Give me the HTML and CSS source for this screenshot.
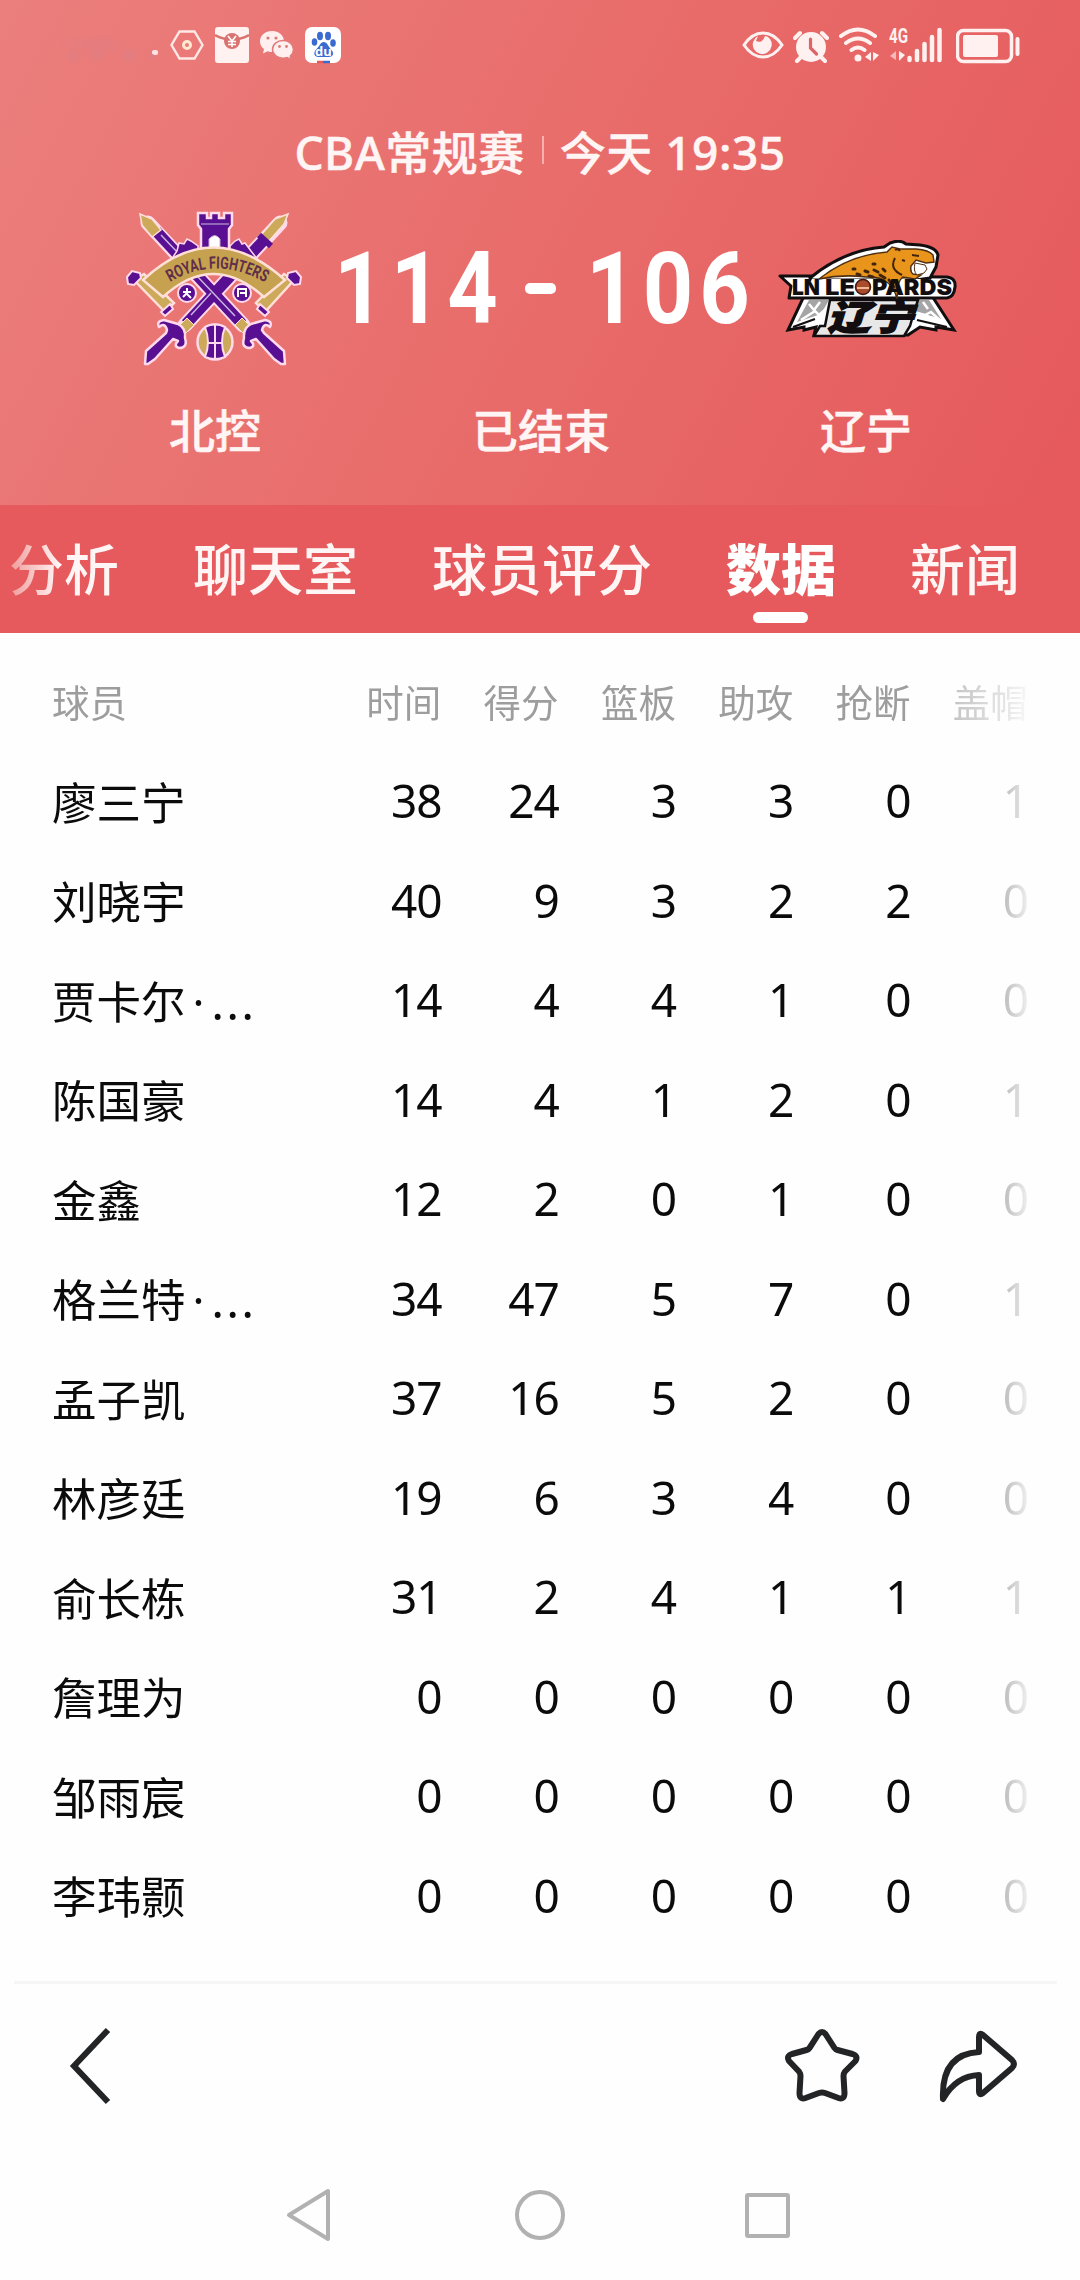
FILE: index.html
```html
<!DOCTYPE html>
<html lang="zh-CN">
<head>
  <meta charset="UTF-8" />
  <title>北控 - 辽宁</title>
  <link rel="stylesheet" href="styles.css">
</head>
<body>
  <header class="hero">
    <div class="status-bar">
      <div class="status-left">
        <svg class="carrier" width="84" height="40" viewBox="0 0 84 40">
          <g fill="#c78398">
            <ellipse cx="15" cy="17" rx="12" ry="6" opacity=".3" />
            <ellipse cx="42" cy="20" rx="20" ry="8" opacity=".4" />
            <circle cx="14" cy="31" r="5" />
            <circle cx="36" cy="30" r="5" />
            <circle cx="69" cy="30" r="6" />
          </g>
        </svg>
        <svg class="dot" width="16" height="40" viewBox="0 0 16 40">
          <rect x="0" y="25" width="6" height="5" rx="2" fill="#fbe3e3" />
          <path d="M-4 31h6" stroke="#b98aa0" stroke-width="4" opacity=".5" />
        </svg>
        <svg width="34" height="40" viewBox="0 0 34 40">
          <path d="M9.500 6.500h15L32.500 20l-8 13.500h-15L1.500 20z" fill="none" stroke="#ffe9e7" stroke-width="2.400" />
          <circle cx="17" cy="20" r="3.500" fill="none" stroke="#ffe9d0" stroke-width="3" />
        </svg>
        <svg width="34" height="40" viewBox="0 0 34 40">
          <rect x="0" y="2" width="34" height="36" rx="3" fill="#fff2f1" />
          <path d="M0 10q17 9 34 0" fill="none" stroke="#d9736f" stroke-width="2.500" />
          <circle cx="17" cy="16" r="8" fill="#d9736f" />
          <path d="M13 11l4 5 4-5M17 16v6M13 16.500h8M13 19.500h8" fill="none" stroke="#fff" stroke-width="1.600" />
        </svg>
        <svg width="34" height="40" viewBox="0 0 34 40">
          <path d="M12 6c7 0 12 4.500 12 10.500S19 27 12 27c-2 0-3-.3-4.500-.8L3 28.500l1-4.500C1.500 22 0 19.500 0 16.500 0 10.500 5 6 12 6z" fill="#fff0ef" />
          <path d="M23 15.500c6 0 10.500 4 10.500 9 0 2.600-1.300 5-3.300 6.500l.8 3.500-4-2c-1.200.4-2.500.7-4 .7-6 0-10.500-4-10.500-8.700 0-5 4.500-9 10.500-9z" fill="#fff0ef" stroke="#e27c7b" stroke-width="1.500" />
          <g fill="#d97a77"><circle cx="8" cy="13" r="1.600" /><circle cx="16" cy="13" r="1.600" /><circle cx="19.500" cy="21.500" r="1.400" /><circle cx="26.500" cy="21.500" r="1.400" /></g>
        </svg>
        <svg width="36" height="40" viewBox="0 0 36 40">
          <rect x="0" y="2" width="36" height="36" rx="7" fill="#fff" />
          <g fill="#3a6bd0">
            <ellipse cx="15" cy="11" rx="3" ry="4.200" /><ellipse cx="23" cy="11" rx="3" ry="4.200" />
            <ellipse cx="9.500" cy="17" rx="2.800" ry="3.800" /><ellipse cx="28" cy="18" rx="2.800" ry="3.800" />
            <path d="M18.500 17c4 0 5 5 8 8 3.500 4 1 7-3 7h-10c-4 0-6-4-2-8 3-2.500 4-7 7-7z" />
          </g>
          <text x="18.500" y="30.500" class="du">du</text>
          <path d="M12 37h6" stroke="#e25a5a" stroke-width="2.500" /><path d="M18 37h7" stroke="#3a6bd0" stroke-width="2.500" />
        </svg>
      </div>
      <div class="status-right">
        <svg width="42" height="40" viewBox="0 0 42 40">
          <path d="M2 20Q10 8 21 8t19 12Q32 32 21 32T2 20z" fill="none" stroke="#fff1f0" stroke-width="3" />
          <path d="M16 11a9.500 9.500 0 1 0 12 3q-2-3-5-3-3 8-9 5z" fill="#fff1f0" />
        </svg>
        <svg width="36" height="40" viewBox="0 0 36 40">
          <path d="M2 13l5-5M34 13l-5-5M8 32l-4 4M28 32l4 4" stroke="#fff1f0" stroke-width="4" stroke-linecap="round" />
          <circle cx="18" cy="22" r="15" fill="#fff1f0" />
          <path d="M17.500 14v9l6 6" fill="none" stroke="#dc6667" stroke-width="3.200" stroke-linecap="round" />
        </svg>
        <svg width="42" height="40" viewBox="0 0 42 40">
          <g fill="none" stroke="#fff1f0" stroke-width="4" stroke-linecap="round">
            <path d="M3 11q17-13 34 0M8 18q12-9 24 0M13.500 25q6.500-5 13 0" />
          </g>
          <circle cx="20" cy="33" r="3.500" fill="#fff1f0" />
          <path d="M33 27v9l-6-4zM35 27v9l6-6z" fill="#fff1f0" />
        </svg>
        <svg width="54" height="40" viewBox="0 0 54 40">
          <text x="0" y="18" class="net" textLength="19" lengthAdjust="spacingAndGlyphs">4G</text>
          <path d="M7 26v9l-6-4z" fill="#fff1f0" opacity=".6" /><path d="M10 26v10l6-6z" fill="#fff1f0" />
          <path d="M20.500 33v2M28 26v9M35.500 19v16M43 12v23M50.500 5v30" stroke="#fff1f0" stroke-width="4.500" stroke-linecap="round" />
        </svg>
        <svg class="battery" width="64" height="40" viewBox="0 0 64 40">
          <rect x="1.500" y="5.500" width="54" height="31" rx="6" fill="none" stroke="#fff1f0" stroke-width="3.500" />
          <rect x="7" y="10" width="35" height="22" rx="2" fill="#fff1f0" />
          <path d="M61.500 14v15" stroke="#fff1f0" stroke-width="4" stroke-linecap="round" />
        </svg>
      </div>
    </div>

    <div class="match-title">
      <span>CBA常规赛</span>
      <i class="sep"></i>
      <span>今天 19:35</span>
    </div>

    <div class="match">
      <svg width="180" height="170" viewBox="0 0 180 170">
        <!-- crossed swords -->
        <g stroke="#ffd9ec" stroke-linecap="round">
          <path d="M23 18L118 120" stroke-width="15" /><path d="M155 18L60 120" stroke-width="15" />
        </g>
        <path d="M31 26L117 119" stroke="#580f92" stroke-width="11" />
        <path d="M140 34L61 119" stroke="#580f92" stroke-width="11" />
        <path d="M72 71L110 111M36 30L55 50M66 110l20-22" stroke="#c9b4df" stroke-width="1.500" />
        <path d="M15 9l12 5 9 11-9 7L17 20zM163 9l-13 5-14 16 8 6 15-17z" fill="#cda95a" stroke="#ffe0d8" stroke-width="1.500" />
        <path d="M134 30l12 11" stroke="#580f92" stroke-width="6" />
        <path d="M52 46l2-8 5 1 3-5 4 2 7 5v14H46zM126 46l-6-8-3 1-3-5-4 2-5 5v14h28z" fill="#580f92" stroke="#ffd9ec" stroke-width="1.500" />
        <!-- castle -->
        <path d="M73 8h9v5h4V8h8v5h5V8h8v12l-3 4v30H76V24l-3-4z" fill="#580f92" stroke="#ffd9ec" stroke-width="2.500" />
        <path d="M84 50V34q6-7 11 0v16z" fill="#fff" stroke="#c9a5d8" stroke-width="1" />
        <path d="M76 19h28" stroke="#a386c4" stroke-width="1.500" />
        <!-- ribbon -->
        <path d="M9 75l10-6 30 29-9 9zM169 75l-10-6-28 29 9 9z" fill="#cda95a" stroke="#ffe0d8" stroke-width="2.500" />
        <path d="M18 75Q88 10 160 75L139 92Q88 46 38 92z" fill="#c6a14f" stroke="#ffe0d8" stroke-width="2.500" />
        <path id="ribbon-curve" d="M45 77Q91 50 139 77" fill="none" />
        <text class="ribbon-text"><textPath href="#ribbon-curve" textLength="100" lengthAdjust="spacingAndGlyphs">ROYAL FIGHTERS</textPath></text>
        <g fill="#580f92" stroke="#ffd9ec" stroke-width="2">
          <path d="M2 72l5-6 8 2 1 5-7 7-6-1zM176 72l-5-6-8 2-1 5 7 7 6-1z" />
          <path d="M36 107l9-8 3 5-8 7zM144 107l-9-8-3 5 8 7z" />
          <circle cx="62" cy="88" r="9" /><circle cx="117" cy="88" r="9" />
        </g>
        <path d="M58 87h8M62 83v5l-4 4M62 89l4 4M113 92v-8h8v8M115 88h5" fill="none" stroke="#fff" stroke-width="2" />
        <!-- hilts -->
        <path d="M62 113l7 7-10 10-7-7zM117 113l-7 7 10 10 7-7z" fill="#cda95a" stroke="#ffe0d8" stroke-width="1" />
        <g fill="#580f92" stroke="#ffd9ec" stroke-width="2.500" stroke-linejoin="round">
          <path d="M42 125q-2-8-8-3-3-6 5-7l14 4q8 4 7 14 3 10-6 10-6-2-1-7l-5-2-18 20-7 5H20l1-13 20-18z" />
          <path d="M137 125q2-8 8-3 3-6-5-7l-14 4q-8 4-7 14-3 10 6 10 6-2 1-7l5-2 18 20 7 5h4l-1-13-20-18z" />
        </g>
        <circle cx="90" cy="137" r="17.500" fill="#cda95a" stroke="#ffd9ec" stroke-width="2.500" />
        <path d="M80 122q10-5 20 0-6 15 0 30-10 4-20 0 6-15 0-30z" fill="#580f92" stroke="#ffd9ec" stroke-width="2" />
        <path d="M90 119v36M82 138h16" stroke="#ffd9ec" stroke-width="2" />
      </svg>

      <div class="score">
        <span class="num">114</span>
        <i class="dash"></i>
        <span class="num">106</span>
      </div>

      <svg class="logo-away" width="180" height="110" viewBox="0 0 180 110">
        <!-- mountains -->
        <path d="M27 56h128l22 34-18-3v3l-16-3-12 8H37l2-8-12 3v-3l-16 3z" fill="#fff" stroke="#120e10" stroke-width="3" />
        <path d="M32 60L20 82l24-8 8-14zM140 60h12l12 19-26-8z" fill="#a5a5a5" />
        <path d="M24 80l14-9 4 4 8-7M136 72l12 3 6-3 14 13M32 64l5 6 6-8M146 62l5 7" fill="none" stroke="#fff" stroke-width="2.500" />
        <path d="M16 87l22-8M140 80l30 7" stroke="#120e10" stroke-width="2" />
        <!-- name plate -->
        <path d="M3 36h38l129 1q9 1 8 10-1 10-8 11H12l2-12z" fill="#fff" stroke="#120e10" stroke-width="3" stroke-linejoin="round" />
        <!-- leopard -->
        <path d="M33 38Q67 10 107 7l6-4q10-4 16 1l14 1q16 2 18 10l-2 12-6 11-14 2H34z" fill="#fff" stroke="#120e10" stroke-width="3" />
        <path d="M35 39h118l-2 4H33z" fill="#fff" />
        <path d="M42 39Q72 15 110 12l5-5 8 2h16q13 1 17 6l1 7-8 1-10-3-5 6q-1 6 2 8l8 1-6 4-12-2q-3 2-5 8l-1 14q-3-12-9-16-8-7-22-6-24-3-47 2z" fill="#e9951b" stroke="#503012" stroke-width="1.500" />
        <path d="M138 23l10 2 2 4-3 4-7 2q-4-4-2-12z" fill="#fff" stroke="#503012" />
        <path d="M135 15l7 1M118 10q3-2 5 1M118 18q-6 11 7 17M125 20l3 1" stroke="#44240c" stroke-width="2" fill="none" />
        <path d="M88 31l3 1M97 30l4 2M106 29l2 2M103 35l5 3M92 36l4 1M80 34l3 1M112 40l5 7M76 29l2 0M96 24l2 0" stroke="#44240c" stroke-width="3" stroke-linecap="round" fill="none" />
        <text x="15" y="55" class="plate-text" textLength="28" lengthAdjust="spacingAndGlyphs">LN</text>
        <text x="48" y="55" class="plate-text" textLength="30" lengthAdjust="spacingAndGlyphs">LE</text>
        <text x="95" y="55" class="plate-text" textLength="80" lengthAdjust="spacingAndGlyphs">PARDS</text>
        <circle cx="86" cy="47" r="7.500" fill="#a94c2c" stroke="#43180e" stroke-width="1.500" />
        <path d="M80 48h12" stroke="#efb794" stroke-width="2" />
        <!-- lower block -->
        <path d="M53 60h88l-4 12-4 14-6 10H37l6-10h5z" fill="#e8e8e8" stroke="#120e10" stroke-width="2.500" />
        <text x="50" y="90" class="block-text" textLength="86" lengthAdjust="spacingAndGlyphs">辽宁</text>
      </svg>
    </div>

    <div class="names">
      <span>北控</span>
      <span>已结束</span>
      <span>辽宁</span>
    </div>
  </header>

  <nav class="tabs">
    <a class="faded">分析</a>
    <a>聊天室</a>
    <a>球员评分</a>
    <a class="active">数据</a>
    <a>新闻</a>
  </nav>

  <main class="stats">
    <div class="row head">
      <span>球员</span><span>时间</span><span>得分</span><span>篮板</span><span>助攻</span><span>抢断</span><span>盖帽</span>
    </div>
    <div class="row"><span>廖三宁</span><span>38</span><span>24</span><span>3</span><span>3</span><span>0</span><span>1</span></div>
    <div class="row"><span>刘晓宇</span><span>40</span><span>9</span><span>3</span><span>2</span><span>2</span><span>0</span></div>
    <div class="row"><span>贾卡尔<b>·</b><em>...</em></span><span>14</span><span>4</span><span>4</span><span>1</span><span>0</span><span>0</span></div>
    <div class="row"><span>陈国豪</span><span>14</span><span>4</span><span>1</span><span>2</span><span>0</span><span>1</span></div>
    <div class="row"><span>金鑫</span><span>12</span><span>2</span><span>0</span><span>1</span><span>0</span><span>0</span></div>
    <div class="row"><span>格兰特<b>·</b><em>...</em></span><span>34</span><span>47</span><span>5</span><span>7</span><span>0</span><span>1</span></div>
    <div class="row"><span>孟子凯</span><span>37</span><span>16</span><span>5</span><span>2</span><span>0</span><span>0</span></div>
    <div class="row"><span>林彦廷</span><span>19</span><span>6</span><span>3</span><span>4</span><span>0</span><span>0</span></div>
    <div class="row"><span>俞长栋</span><span>31</span><span>2</span><span>4</span><span>1</span><span>1</span><span>1</span></div>
    <div class="row"><span>詹理为</span><span>0</span><span>0</span><span>0</span><span>0</span><span>0</span><span>0</span></div>
    <div class="row"><span>邹雨宸</span><span>0</span><span>0</span><span>0</span><span>0</span><span>0</span><span>0</span></div>
    <div class="row"><span>李玮颢</span><span>0</span><span>0</span><span>0</span><span>0</span><span>0</span><span>0</span></div>
  </main>

  <footer class="toolbar">
    <svg width="44" height="80" viewBox="0 0 44 80">
      <path d="M39 4L5 40l34 36" fill="none" stroke="#222426" stroke-width="6" />
    </svg>
    <svg class="star" width="76" height="76" viewBox="0 0 76 76">
      <path d="M34.500 6q3.500-4 7 0l9 14q1 1.500 3 2l15 4q6 2 3 7L61 43.500q-1.500 2-1.500 4.500l1 17q0 7-6 5L41 65q-3-1-6 0l-13.500 5q-6 2-6-5l1-17q0-2.500-1.500-4.500L5 33q-3-5 3-7l14.500-4q2-.5 3-2z" fill="none" stroke="#222426" stroke-width="6" stroke-linejoin="round" />
    </svg>
    <svg width="80" height="76" viewBox="0 0 80 76">
      <path d="M41 9q0-5 4-2L74 32q4 4 0 8L45 65q-4 3-4-2V47Q18 48 5 71 3 26 41 24z" fill="none" stroke="#222426" stroke-width="6" stroke-linejoin="round" />
    </svg>
  </footer>

  <div class="sys-nav">
    <svg width="50" height="56" viewBox="0 0 50 56"><path d="M43 4v48L4 28z" fill="none" stroke="#b1b1b1" stroke-width="4" stroke-linejoin="round" /></svg>
    <i class="home"></i>
    <i class="recent"></i>
  </div>
</body>
</html>
```

FILE: styles.css
```css
* {
  box-sizing: border-box;
}

body {
  margin: 0;
  width: 1080px;
  height: 2280px;
  overflow: hidden;
  background: #fefefe;
  font-family: "Noto Sans CJK SC", sans-serif;
  color: #0b0b0b;
}

svg {
  display: block;
  flex: none;
}

.hero {
  height: 505px;
  background: linear-gradient(118deg, #eb7f7d 0%, #e86d6b 48%, #e65a5d 97%);
  color: #fff5f4;
  font-weight: 500;
}

.status-bar {
  height: 90px;
  padding: 25px 60px 0 60px;
  display: flex;
  justify-content: space-between;
}

.status-left {
  display: flex;
  gap: 11px;
}

.status-left .carrier {
  margin-right: -3px;
  opacity: 0.3;
  filter: blur(3px);
}

.status-left .dot {
  margin-right: -9px;
}

.status-right {
  display: flex;
  gap: 9px;
}

.status-right .battery {
  margin-left: 4px;
}

.du {
  font: bold 13px "Open Sans", sans-serif;
  fill: #fff;
  text-anchor: middle;
}

.net {
  font: bold 20px Roboto, sans-serif;
  fill: #fff1f0;
}

.match-title {
  height: 115px;
  padding-top: 4px;
  display: flex;
  justify-content: center;
  align-items: center;
  font-family: "Noto Sans", "Noto Sans CJK SC", sans-serif;
  font-size: 46px;
  letter-spacing: 0.5px;
  -webkit-text-stroke: 0.5px #fff5f4;
}

.sep {
  width: 2px;
  height: 28px;
  margin: 0 16px 0 17px;
  background: #f3b0ae;
}

.match {
  height: 170px;
  padding-left: 125px;
  display: flex;
  align-items: flex-start;
}

.logo-away {
  margin-top: 35px;
}

.ribbon-text {
  font: bold 17px Roboto, sans-serif;
  fill: #5f2f4a;
}

.plate-text {
  font: 900 22px Inter, sans-serif;
  fill: #120e10;
}

.block-text {
  font: italic 900 34px "Noto Sans CJK SC", sans-serif;
  fill: #120e10;
  stroke: #120e10;
  stroke-width: 1.5px;
}

.score {
  margin: 34px 21px 0 29px;
  display: flex;
  align-items: center;
  color: #fff;
  font: bold 100px/1 Roboto, sans-serif;
}

/* narrow scoreboard digits */
.num {
  width: 170px;
  letter-spacing: 7px;
  transform: scaleX(0.88);
  transform-origin: left;
}

.dash {
  width: 31px;
  height: 11px;
  margin: 0 30px 2px 21px;
  border-radius: 5px;
  background: #fff;
}

.names {
  height: 106px;
  display: grid;
  grid-template-columns: 430px 1fr 428px;
  align-items: center;
  text-align: center;
  font-size: 46px;
  -webkit-text-stroke: 0.5px #fff5f4;
}

.tabs {
  height: 128px;
  padding: 0 9px;
  display: flex;
  gap: 74px;
  background: #e65a5d;
  color: #fff5f4;
  font-size: 55px;
  font-weight: 500;
  line-height: 122px;
  white-space: nowrap;
}

.tabs .faded {
  background: linear-gradient(90deg, #f09a9a 0, #fff5f4 50px);
  background-clip: text;
  -webkit-background-clip: text;
  color: transparent;
}

.tabs .active {
  position: relative;
  color: #fff;
  font-weight: 900;
}

.tabs .active::after {
  content: "";
  position: absolute;
  left: 27px;
  bottom: 10px;
  width: 55px;
  height: 11px;
  border-radius: 6px;
  background: #fff;
}

.stats {
  height: 1348px;
  margin: 0 53px 0 52px;
  padding-top: 18px;
  -webkit-mask-image: linear-gradient(90deg, #000 870px, rgba(0,0,0,0.55) 908px, rgba(0,0,0,0.24) 955px, rgba(0,0,0,0.07) 975px);
  mask-image: linear-gradient(90deg, #000 870px, rgba(0,0,0,0.55) 908px, rgba(0,0,0,0.24) 955px, rgba(0,0,0,0.07) 975px);
}

.row {
  height: 99.500px;
  display: grid;
  grid-template-columns: 272px repeat(6, 117.300px);
  align-items: center;
  font-size: 44.500px;
  white-space: nowrap;
}

.row span:not(:first-child) {
  font-family: "Noto Sans", "Noto Sans CJK SC", sans-serif;
  font-size: 46px;
  letter-spacing: -1.2px;
  text-align: right;
}

.row b {
  margin: 0 7px 0 7px;
  font-family: "Noto Sans";
  font-weight: 400;
}

.row em {
  font-style: normal;
  letter-spacing: 2.700px;
}

.row.head {
  color: #9d9d9d;
}

.row.head span {
  font-family: "Noto Sans CJK SC", sans-serif;
  font-size: 37.500px;
  letter-spacing: 0;
}

.toolbar {
  height: 173px;
  margin: 0 23px 0 14px;
  padding: 0 39px 7px 55px;
  display: flex;
  align-items: center;
  border-top: 3px solid #f6f6f6;
}

.star {
  margin: 0 78px 0 auto;
}

.sys-nav {
  height: 126px;
  padding: 0 290px 4px 285px;
  display: flex;
  align-items: center;
  justify-content: space-between;
}

.home {
  width: 50px;
  height: 50px;
  border: 4px solid #b1b1b1;
  border-radius: 50%;
}

.recent {
  width: 45px;
  height: 45px;
  border: 4px solid #b1b1b1;
  border-radius: 3px;
}
```
